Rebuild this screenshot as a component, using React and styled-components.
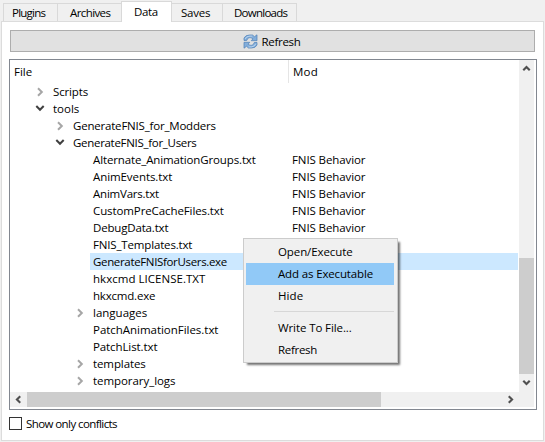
import React from "react";
import styled, { createGlobalStyle } from "styled-components";

const GlobalStyle = createGlobalStyle`
  * { box-sizing: border-box; }
  body { margin: 0; background: #f0f0f0; overflow: hidden; }
`;

const Window = styled.div`
  position: relative;
  display: flex;
  flex-direction: column;
  width: 545px;
  height: 442px;
  padding: 1px 1px 1px 1px;
  background: #f0f0f0;
  color: #000;
  font: 11.5px/16px "Open Sans", "Noto Sans", sans-serif;
  white-space: pre;
  cursor: default;
`;

const Label = styled.span`
  letter-spacing: ${(p) => p.$track || 0}px;
`;

const TabBar = styled.div`
  display: flex;
  align-items: flex-end;
  height: 20px;
  padding-left: 2px;
`;

const Tab = styled.div`
  width: ${(p) => p.$width}px;
  height: 18px;
  padding: 1px 0 0 ${(p) => p.$inset}px;
  border: 1px solid #d9d9d9;
  border-bottom: 0;
  border-right-width: ${(p) => (p.$joined ? 0 : 1)}px;
`;

const MiddleTab = styled(Tab)`
  border-left-width: ${(p) => (p.$afterActive ? 0 : 1)}px;
`;

const ActiveTab = styled(Tab)`
  height: 21px;
  margin-bottom: -1px;
  padding-top: 2px;
  background: #fff;
  z-index: 1;
`;

const Pane = styled.div`
  display: flex;
  flex-direction: column;
  width: 543px;
  height: 420px;
  padding: 8px 7px 0;
  background: #fff;
  border: 1px solid #dcdcdc;
`;

const RefreshButton = styled.div`
  display: flex;
  align-items: center;
  justify-content: center;
  gap: 3px;
  width: 525px;
  height: 22px;
  margin-left: 1px;
  padding: 1px 1px 0 0;
  background: #e1e1e1;
  border: 1px solid #adadad;
`;

const TreeView = styled.div`
  display: grid;
  grid-template: 332px 16px / 509px 16px;
  width: 528px;
  height: 351px;
  margin-top: 7px;
  background: #fff;
  border: 1px solid #828790;
`;

const TreeBody = styled.div`
  overflow: hidden;
`;

const Columns = styled.div`
  display: flex;
  height: 23px;
`;

const FileHeader = styled.div`
  width: 279px;
  padding: 4px 0 0 4px;
  border-right: 1px solid #e5e5e5;
`;

const ModHeader = styled.div`
  padding: 4px 0 0 4px;
`;

const Row = styled.div`
  display: flex;
  height: 17px;
  line-height: 17px;
  padding-left: ${(p) => 23 + p.$depth * 20}px;
`;

const Twisty = styled.div`
  display: flex;
  align-items: center;
  justify-content: center;
  width: 14px;
  height: ${(p) => (p.$open ? 15 : 17)}px;
  margin-right: 3px;
`;

const Cells = styled.div`
  display: flex;
  flex: 1;
  margin-right: 1px;
  padding-left: 3px;
  background: ${(p) => (p.$selected ? "#cce8ff" : "transparent")};
`;

const FileCell = styled.div`
  width: 199px;
`;

const VerticalScroll = styled.div`
  display: flex;
  flex-direction: column;
  align-items: center;
  background: #f0f0f0;
  width: 15px;
`;

const VerticalThumb = styled.div`
  width: 15px;
  height: 116px;
  margin-top: 181px;
  background: #cdcdcd;
`;

const HorizontalScroll = styled.div`
  display: flex;
  align-items: flex-start;
  height: 15px;
  background: #f0f0f0;
`;

const HorizontalThumb = styled.div`
  width: 354px;
  height: 15px;
  background: #cdcdcd;
`;

const ScrollCorner = styled.div`
  width: 15px;
  height: 15px;
  background: #f0f0f0;
`;

const ArrowButton = styled.div`
  display: flex;
  align-items: center;
  justify-content: center;
  width: 17px;
  height: 17px;
`;

const SideArrowButton = styled(ArrowButton)`
  height: 15px;
  margin-left: ${(p) => (p.$end ? "auto" : 0)};
`;

const Conflicts = styled.div`
  display: flex;
  align-items: center;
  gap: 4px;
  height: 15px;
  margin-top: 6px;
`;

const CheckBox = styled.div`
  width: 13px;
  height: 13px;
  border: 1px solid #333;
  background: #fff;
`;

const Menu = styled.div`
  position: absolute;
  left: 243px;
  top: 238px;
  z-index: 2;
  width: 155px;
  height: 125px;
  padding: 2px;
  background: #f0f0f0;
  border: 1px solid #ccc;
  box-shadow: 3px 3px 2px -1px rgba(0, 0, 0, 0.55);
`;

const MenuItem = styled.div`
  height: 22px;
  width: 148px;
  padding-left: 32px;
  line-height: 22px;
  background: ${(p) => (p.$active ? "#91c9f7" : "transparent")};
`;

const MenuSeparator = styled.div`
  height: 1px;
  width: 120px;
  margin: 4px 0 5px 28px;
  background: #d7d7d7;
`;

const rotations = { right: 0, down: 90, left: 180, up: 270 };

function Chevron({ dir, color = "#505050", size = 7, weight = 2.4 }) {
  return (
    <svg width={size} height={size} viewBox="0 0 8 8" overflow="visible">
      <path
        d="M2 0.3 L5.8 4 L2 7.7"
        transform={`rotate(${rotations[dir]} 4 4)`}
        fill="none"
        stroke={color}
        strokeWidth={weight}
      />
    </svg>
  );
}

function RefreshIcon() {
  return (
    <svg width="15" height="15" viewBox="0 0 15 15">
      <g fill="#83aedb" stroke="#4f80b6" strokeWidth="0.7" strokeLinejoin="round">
        <path d="M1 6.5 V4 Q2.5 1 6.5 1 H9.5 L11.5 2.7 L14 .8 V6.7 H8.2 L10 4.8 Q8 3.3 6 3.7 Q4.3 4.3 3.7 6.5Z" />
        <path d="M14 8.5 V11 Q12.5 14 8.5 14 H5.5 L3.5 12.3 L1 14.2 V8.3 H6.8 L5 10.2 Q7 11.7 9 11.3 Q10.7 10.7 11.3 8.5Z" />
      </g>
      <path d="M2 5 Q3.5 2 7 2.1 H9.2 M5.7 12.9 H8.2 Q11.5 12.8 12.8 9.8" fill="none" stroke="#bcd6ef" strokeWidth="0.9" />
    </svg>
  );
}

const rows = [
  { name: "Scripts", depth: 0, open: false, track: -0.14 },
  { name: "tools", depth: 0, open: true },
  { name: "GenerateFNIS_for_Modders", depth: 1, open: false, track: -0.2 },
  { name: "GenerateFNIS_for_Users", depth: 1, open: true, track: -0.3 },
  { name: "Alternate_AnimationGroups.txt", depth: 2, mod: true, track: -0.13 },
  { name: "AnimEvents.txt", depth: 2, mod: true, track: -0.08 },
  { name: "AnimVars.txt", depth: 2, mod: true, track: -0.22 },
  { name: "CustomPreCacheFiles.txt", depth: 2, mod: true, track: -0.1 },
  { name: "DebugData.txt", depth: 2, mod: true, track: -0.17 },
  { name: "FNIS_Templates.txt", depth: 2, track: -0.16 },
  { name: "GenerateFNISforUsers.exe", depth: 2, selected: true, track: -0.34 },
  { name: "hkxcmd LICENSE.TXT", depth: 2, track: 0.03 },
  { name: "hkxcmd.exe", depth: 2, track: -0.2 },
  { name: "languages", depth: 2, open: false },
  { name: "PatchAnimationFiles.txt", depth: 2, track: -0.03 },
  { name: "PatchList.txt", depth: 2, track: -0.1 },
  { name: "templates", depth: 2, open: false, track: -0.1 },
  { name: "temporary_logs", depth: 2, open: false, track: -0.06 },
];

function TreeRow({ row }) {
  return (
    <Row $depth={row.depth}>
      <Twisty $open={row.open}>
        {row.open === true && <Chevron dir="down" color="#404040" size={8} weight={2} />}
        {row.open === false && <Chevron dir="right" color="#a6a6a6" size={8} weight={2} />}
      </Twisty>
      <Cells $selected={row.selected}>
        <FileCell>
          <Label $track={row.track}>{row.name}</Label>
        </FileCell>
        {row.mod && <Label $track={-0.1}>FNIS Behavior</Label>}
      </Cells>
    </Row>
  );
}

export default function App() {
  return (
    <Window>
      <GlobalStyle />
      <TabBar>
        <Tab $width={54} $inset={8} $joined><Label $track={-0.75}>Plugins</Label></Tab>
        <Tab $width={64} $inset={12} $joined><Label $track={-0.6}>Archives</Label></Tab>
        <ActiveTab $width={51} $inset={12}><Label $track={-0.4}>Data</Label></ActiveTab>
        <MiddleTab $width={50} $inset={9} $joined $afterActive><Label $track={-0.2}>Saves</Label></MiddleTab>
        <Tab $width={75} $inset={11}><Label $track={-0.75}>Downloads</Label></Tab>
      </TabBar>
      <Pane>
        <RefreshButton>
          <RefreshIcon />
          <Label $track={-0.3}>Refresh</Label>
        </RefreshButton>
        <TreeView>
          <TreeBody>
            <Columns>
              <FileHeader><Label $track={0}>File</Label></FileHeader>
              <ModHeader><Label $track={0.2}>Mod</Label></ModHeader>
            </Columns>
            {rows.map((row) => <TreeRow key={row.name} row={row} />)}
          </TreeBody>
          <VerticalScroll>
            <ArrowButton><Chevron dir="up" /></ArrowButton>
            <VerticalThumb />
            <ArrowButton><Chevron dir="down" /></ArrowButton>
          </VerticalScroll>
          <HorizontalScroll>
            <SideArrowButton><Chevron dir="left" /></SideArrowButton>
            <HorizontalThumb />
            <SideArrowButton $end><Chevron dir="right" /></SideArrowButton>
          </HorizontalScroll>
          <ScrollCorner />
        </TreeView>
        <Conflicts>
          <CheckBox />
          <Label $track={-0.58}>Show only conflicts</Label>
        </Conflicts>
      </Pane>
      <Menu>
        <MenuItem><Label $track={-0.1}>Open/Execute</Label></MenuItem>
        <MenuItem $active><Label $track={-0.15}>Add as Executable</Label></MenuItem>
        <MenuItem><Label $track={0.1}>Hide</Label></MenuItem>
        <MenuSeparator />
        <MenuItem><Label $track={-0.1}>Write To File...</Label></MenuItem>
        <MenuItem><Label $track={-0.3}>Refresh</Label></MenuItem>
      </Menu>
    </Window>
  );
}
